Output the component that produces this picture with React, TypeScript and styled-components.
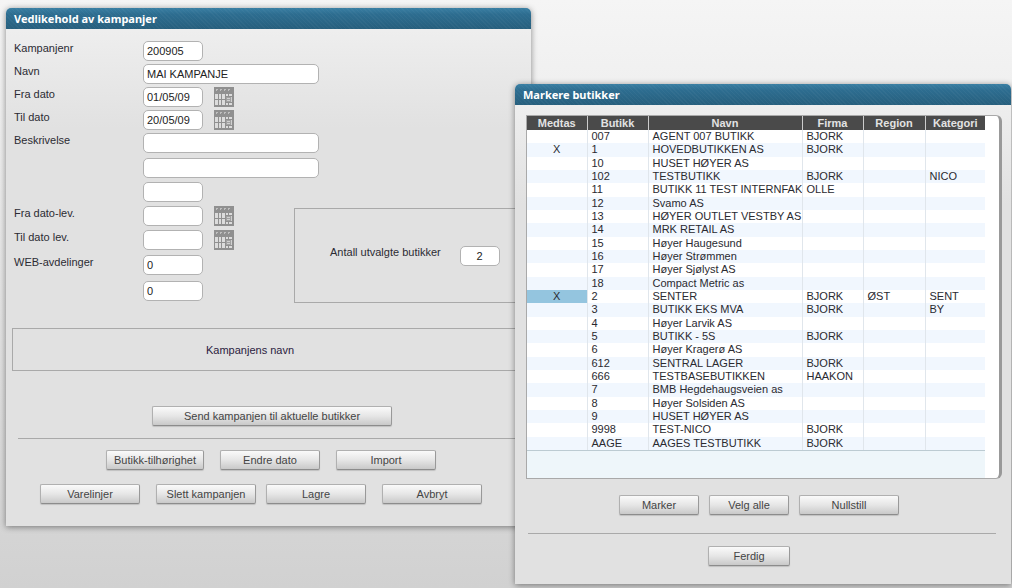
import React from "react";
import styled, { createGlobalStyle, css } from "styled-components";

const GlobalStyle = createGlobalStyle`
  * { box-sizing: border-box; }
  html { height: 100%; }
  body {
    margin: 0;
    min-height: 100%;
    background: linear-gradient(#f5f5f5, #d1d1d1) no-repeat #d1d1d1;
    color: #2b2b33;
    font: 11px/14px "Liberation Sans", Arial, sans-serif;
  }
`;

const Desktop = styled.main`
  position: relative;
  min-height: 588px;
  overflow: hidden;
`;

const Window = styled.section`
  position: absolute;
  border-radius: 5px 5px 0 0;
  background: linear-gradient(#f1f1f1, #e1e1e1 120px);
  box-shadow: 0 1px 6px rgba(0, 0, 0, 0.45);
`;

const CampaignWindow = styled(Window)`
  top: 8px;
  left: 6px;
  right: 481px;
  min-width: 525px;
`;

const StoreWindow = styled(Window)`
  top: 84px;
  left: 515px;
  right: 1px;
  min-width: 496px;
`;

const TitleBar = styled.h2`
  margin: 0;
  height: 21px;
  padding: 0 8px;
  border-radius: 5px 5px 0 0;
  background:
    repeating-linear-gradient(45deg, rgba(255, 255, 255, 0.03) 0 1px, transparent 1px 3px),
    linear-gradient(#3a7fa3, #2d6d90 30%, #275f7d);
  color: #fff;
  font: bold 11px/21px "Noto Sans", "Liberation Sans", sans-serif;
`;

const CampaignBody = styled.form`
  padding: 12px 10px 22px 6px;
`;

const FormArea = styled.div`
  display: grid;
  grid-template-columns: 280px 1fr;
  padding-left: 2px;
`;

const Fields = styled.div`
  display: grid;
  gap: 5px;
  padding-bottom: 2px;
`;

const FieldGroup = styled.div<{ $gap: number }>`
  display: grid;
  gap: ${(p) => p.$gap}px;
`;

const FieldRow = styled.div`
  display: flex;
  align-items: flex-start;
  height: 20px;
`;

const FieldLabel = styled.label`
  width: 129px;
`;

const TextBox = styled.input<{ $size?: "small" | "wide" }>`
  width: ${(p) => (p.$size === "small" ? 40 : p.$size === "wide" ? 176 : 60)}px;
  height: 20px;
  padding: 0 3px;
  border: 1px solid #b2b2b2;
  border-radius: 5px;
  background: #fff;
  color: #222;
  font: inherit;
  text-align: ${(p) => (p.$size === "small" ? "center" : "left")};
`;

const CalendarButton = styled.button`
  display: block;
  width: 20px;
  height: 20px;
  margin-left: 11px;
  padding: 0;
  border: 0;
  background: none;

  svg {
    display: block;
  }
`;

const panel = css`
  display: flex;
  align-items: center;
  border: 1px solid #a9a9a9;
`;

const CountPanel = styled.div`
  ${panel}
  align-self: end;
  gap: 19px;
  height: 95px;
  padding-left: 35px;

  label {
    padding-bottom: 8px;
  }
`;

const NamePanel = styled.div`
  ${panel}
  height: 43px;
  margin-top: 25px;
  padding-left: 193px;
  color: #2b2140;
`;

const Divider = styled.hr`
  height: 1px;
  margin: 12px 6px 11px;
  border: 0;
  background: #a9a9a9;
`;

const PushButton = styled.button<{ $width?: number }>`
  width: ${(p) => p.$width ?? 100}px;
  height: 20px;
  padding: 0;
  border: 1px solid #999;
  border-color: #b0b0b0 #999 #8c8c8c #b0b0b0;
  border-radius: 2px;
  background: linear-gradient(#fafafa, #e6e6e6 50%, #c9c9c9);
  box-shadow: 0 1px 1px rgba(0, 0, 0, 0.15);
  color: #444;
  font: inherit;
  white-space: nowrap;
`;

const ButtonRow = styled.div<{ $indent: number; $gap?: number }>`
  display: flex;
  gap: ${(p) => p.$gap ?? 16}px;
  padding-left: ${(p) => p.$indent}px;
`;

const ButtonPair = styled.div`
  display: flex;
  gap: 16px;
`;

const CampaignActions = styled.div`
  padding-top: 35px;

  ${ButtonRow} + ${ButtonRow} {
    margin-top: 14px;
  }
`;

const StoreBody = styled.div`
  padding: 10px 9px 18px 11px;
`;

const ListFrame = styled.div`
  border: 1px solid #a9a9a9;
  border-right: 3px solid #999;
  border-radius: 0 6px 6px 0;
  padding-right: 14px;
  background: #fff;
`;

const StoreTable = styled.table`
  width: 100%;
  height: 334px;
  border-collapse: collapse;
  table-layout: fixed;
  line-height: 13px;
`;

const HeadCell = styled.th<{ $width?: number }>`
  width: ${(p) => (p.$width ? `${p.$width}px` : "auto")};
  height: 14px;
  padding: 0;
  border-right: 1px solid #ccc;
  background: #4a4a4a;
  color: #e2e2e2;

  &:last-child {
    border-right: 0;
  }
`;

const StoreRow = styled.tr`
  &:nth-child(even) {
    background: #f1f7fe;
  }
`;

const Cell = styled.td<{ $mark?: boolean; $selected?: boolean }>`
  padding: 0 0 0 4px;
  border-right: 1px solid #e0e6ec;
  overflow: hidden;
  white-space: nowrap;
  color: #2a2a30;
  ${(p) => p.$mark && css`
    padding: 0;
    text-align: center;
  `}
  ${(p) => p.$selected && css`background: #94c5df;`}

  &:last-child {
    border-right: 0;
  }
`;

const ListFooter = styled.div`
  height: 28px;
  border-top: 1px solid #bccbd2;
  background: #eef6fa;
`;

const StoreActions = styled.div`
  padding-top: 16px;

  ${Divider} {
    margin: 18px 6px 12px 2px;
  }
`;

function CalendarIcon() {
  return (
    <svg width="20" height="20" viewBox="0 0 20 20" aria-hidden="true" shapeRendering="crispEdges">
      <rect width="20" height="20" fill="#909090" />
      <path d="M2 2h2v1h-1v1h-1zM6 2h2v1h-1v1h-1zM10 2h2v1h-1v1h-1zM14 2h2v1h-1v1h-1z" fill="#c0c0c0" />
      <path d="M1 7h3v5H1zM5 7h2v5H5zM8 7h3v5H8zM12 7h2v2h-2zM15 7h3v2h-3zM1 13h3v5H1zM5 13h2v5H5zM8 13h3v5H8zM12 16h2v2h-2zM15 16h3v2h-3z" fill="#dcdcdc" />
      <path d="M12 10h6v5h-6z" fill="#a2a2a2" />
      <path d="M13 11h3v1h-3zM13 13h3v1h-3zM17 10h1v5h-1z" fill="#d0d0d0" />
    </svg>
  );
}

type Field = { id: string; label?: string; value?: string; wide?: boolean; date?: boolean };

const groups: { gap: number; fields: Field[] }[] = [
  {
    gap: 3,
    fields: [
      { id: "nr", label: "Kampanjenr", value: "200905" },
      { id: "navn", label: "Navn", value: "MAI KAMPANJE", wide: true },
      { id: "fra", label: "Fra dato", value: "01/05/09", date: true },
      { id: "til", label: "Til dato", value: "20/05/09", date: true },
      { id: "besk1", label: "Beskrivelse", wide: true },
    ],
  },
  {
    gap: 4,
    fields: [
      { id: "besk2", wide: true },
      { id: "besk3" },
      { id: "fralev", label: "Fra dato-lev.", date: true },
      { id: "tillev", label: "Til dato lev.", date: true },
    ],
  },
  {
    gap: 6,
    fields: [
      { id: "web1", label: "WEB-avdelinger", value: "0" },
      { id: "web2", value: "0" },
    ],
  },
];

type Store = [nr: string, name: string, firma?: string, region?: string, category?: string];

const stores: Store[] = [
  ["007", "AGENT 007 BUTIKK", "BJORK"],
  ["1", "HOVEDBUTIKKEN AS", "BJORK"],
  ["10", "HUSET HØYER AS"],
  ["102", "TESTBUTIKK", "BJORK", "", "NICO"],
  ["11", "BUTIKK 11 TEST INTERNFAK", "OLLE"],
  ["12", "Svamo AS"],
  ["13", "HØYER OUTLET VESTBY AS"],
  ["14", "MRK RETAIL AS"],
  ["15", "Høyer Haugesund"],
  ["16", "Høyer Strømmen"],
  ["17", "Høyer Sjølyst AS"],
  ["18", "Compact Metric as"],
  ["2", "SENTER", "BJORK", "ØST", "SENT"],
  ["3", "BUTIKK EKS MVA", "BJORK", "", "BY"],
  ["4", "Høyer Larvik AS"],
  ["5", "BUTIKK - 5S", "BJORK"],
  ["6", "Høyer Kragerø AS"],
  ["612", "SENTRAL LAGER", "BJORK"],
  ["666", "TESTBASEBUTIKKEN", "HAAKON"],
  ["7", "BMB Hegdehaugsveien as"],
  ["8", "Høyer Solsiden AS"],
  ["9", "HUSET HØYER AS"],
  ["9998", "TEST-NICO", "BJORK"],
  ["AAGE", "AAGES TESTBUTIKK", "BJORK"],
];

const included = ["1", "2"];
const selected = "2";

export default function App() {
  return (
    <>
      <GlobalStyle />
      <Desktop>
        <CampaignWindow>
          <TitleBar>Vedlikehold av kampanjer</TitleBar>
          <CampaignBody onSubmit={(e) => e.preventDefault()}>
            <FormArea>
              <Fields>
                {groups.map((group) => (
                  <FieldGroup key={group.gap} $gap={group.gap}>
                    {group.fields.map((f) => (
                      <FieldRow key={f.id}>
                        <FieldLabel htmlFor={f.id}>{f.label}</FieldLabel>
                        <TextBox id={f.id} $size={f.wide ? "wide" : undefined} defaultValue={f.value} />
                        {f.date && (
                          <CalendarButton type="button">
                            <CalendarIcon />
                          </CalendarButton>
                        )}
                      </FieldRow>
                    ))}
                  </FieldGroup>
                ))}
              </Fields>
              <CountPanel>
                <label htmlFor="antall">Antall utvalgte butikker</label>
                <TextBox id="antall" $size="small" defaultValue="2" />
              </CountPanel>
            </FormArea>
            <NamePanel>Kampanjens navn</NamePanel>
            <CampaignActions>
              <ButtonRow $indent={140}>
                <PushButton type="button" $width={240}>Send kampanjen til aktuelle butikker</PushButton>
              </ButtonRow>
              <Divider />
              <ButtonRow $indent={94}>
                <PushButton type="button" $width={98}>Butikk-tilhørighet</PushButton>
                <PushButton type="button">Endre dato</PushButton>
                <PushButton type="button">Import</PushButton>
              </ButtonRow>
              <ButtonRow $indent={28} $gap={10}>
                <ButtonPair>
                  <PushButton type="button">Varelinjer</PushButton>
                  <PushButton type="button">Slett kampanjen</PushButton>
                </ButtonPair>
                <ButtonPair>
                  <PushButton type="button">Lagre</PushButton>
                  <PushButton type="button">Avbryt</PushButton>
                </ButtonPair>
              </ButtonRow>
            </CampaignActions>
          </CampaignBody>
        </CampaignWindow>

        <StoreWindow>
          <TitleBar>Markere butikker</TitleBar>
          <StoreBody>
            <ListFrame>
              <StoreTable>
                <thead>
                  <tr>
                    <HeadCell $width={60}>Medtas</HeadCell>
                    <HeadCell $width={61}>Butikk</HeadCell>
                    <HeadCell>Navn</HeadCell>
                    <HeadCell $width={61}>Firma</HeadCell>
                    <HeadCell $width={62}>Region</HeadCell>
                    <HeadCell $width={60}>Kategori</HeadCell>
                  </tr>
                </thead>
                <tbody>
                  {stores.map(([nr, name, firma, region, category]) => (
                    <StoreRow key={nr}>
                      <Cell $mark $selected={nr === selected}>{included.includes(nr) ? "X" : ""}</Cell>
                      <Cell>{nr}</Cell>
                      <Cell>{name}</Cell>
                      <Cell>{firma}</Cell>
                      <Cell>{region}</Cell>
                      <Cell>{category}</Cell>
                    </StoreRow>
                  ))}
                </tbody>
              </StoreTable>
              <ListFooter />
            </ListFrame>
            <StoreActions>
              <ButtonRow $indent={93} $gap={10}>
                <PushButton type="button" $width={80}>Marker</PushButton>
                <PushButton type="button" $width={80}>Velg alle</PushButton>
                <PushButton type="button">Nullstill</PushButton>
              </ButtonRow>
              <Divider />
              <ButtonRow $indent={182}>
                <PushButton type="button" $width={82}>Ferdig</PushButton>
              </ButtonRow>
            </StoreActions>
          </StoreBody>
        </StoreWindow>
      </Desktop>
    </>
  );
}
